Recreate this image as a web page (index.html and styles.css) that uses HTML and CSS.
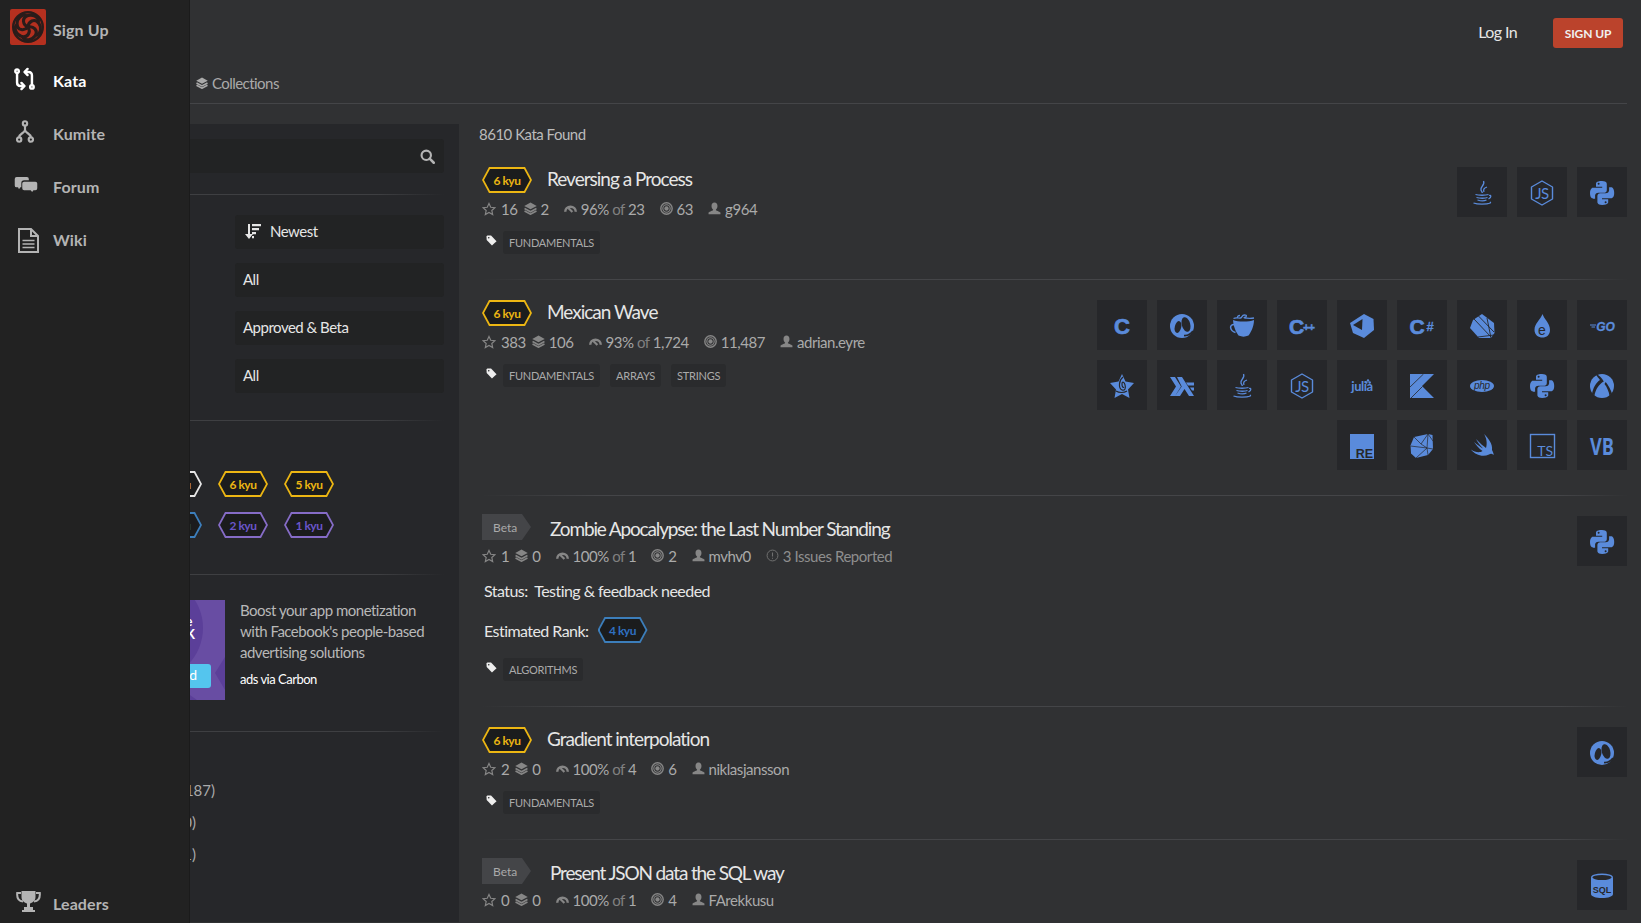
FILE: index.html
```html
<!DOCTYPE html>
<html lang="en">
<head>
<meta charset="utf-8">
<title>Kata</title>
<link rel="stylesheet" href="styles.css">
</head>
<body>
<svg class="sprite" xmlns="http://www.w3.org/2000/svg">
  <symbol id="star" viewBox="0 0 24 24"><polygon points="12 2.500 15 9 22 9.800 16.800 14.500 18.300 21.500 12 18 5.700 21.500 7.200 14.500 2 9.800 9 9" fill="none" stroke="currentColor" stroke-width="2"/></symbol>
  <symbol id="layers" viewBox="0 0 24 24"><path d="M12 1 23.500 7.500 12 13.500 .5 7.500Z" fill="currentColor"/><path d="M1 12 12 18 23 12M1 16.500 12 22.500 23 16.500" fill="none" stroke="currentColor" stroke-width="3"/></symbol>
  <symbol id="gauge" viewBox="0 0 24 24"><path d="M0 18A12 11.500 0 0 1 24 18H19.500A7.500 7 0 0 0 4.500 18Z" fill="currentColor"/><path d="M8 11 15.500 18.500" stroke="currentColor" stroke-width="4"/></symbol>
  <symbol id="target" viewBox="0 0 24 24"><g fill="none" stroke="currentColor"><circle cx="12" cy="12" r="10.500" stroke-width="2.600"/><circle cx="12" cy="12" r="6.800" stroke-width="2"/></g><circle cx="12" cy="12" r="4" fill="currentColor"/></symbol>
  <symbol id="user" viewBox="0 0 24 24"><path d="M12 1c3.500 0 5.500 2.700 5.500 6.500 0 3-1.400 5.500-3 6.700 0 2 6.500 2.800 8.500 5.300v3H1v-3c2-2.500 8.500-3.300 8.500-5.300-1.600-1.200-3-3.700-3-6.700C6.500 3.700 8.500 1 12 1Z" fill="currentColor"/></symbol>
  <symbol id="alert" viewBox="0 0 24 24"><circle cx="12" cy="12" r="10" fill="none" stroke="currentColor" stroke-width="1.800"/><path d="M12 6.500V14M12 16v2" stroke="currentColor" stroke-width="2"/></symbol>
  <symbol id="tag" viewBox="0 0 24 24"><path d="M1 2.500 3 1H11L23 13.500 13 23 1.500 11Z" fill="currentColor"/><circle cx="6" cy="6" r="1.800" fill="#303133"/></symbol>

  <symbol id="java" viewBox="0 0 50 50"><g fill="none" stroke="currentColor" stroke-width="1.300"><path d="M26.500 14c2 4-3.500 5.500-2.500 9 .3 1.200 1.300 2 1.300 3M30 20c-3 1-4 2.500-3 5"/><path d="M18.500 27.500c3 1 10 1 13 0M19.500 30.500c3 1 9 1 11 0M32 28.500c2-.8 3 1.500-.5 3.500M20.500 33c3 1 7 1 9 0"/><path d="M16.500 36c4 1.500 13 1.500 17 0M33 35c1 .8.500 1-1 1.300"/></g></symbol>
  <symbol id="js" viewBox="0 0 50 50"><path d="M25 14 35.500 20V32L25 38 14.500 32V20Z" fill="none" stroke="currentColor" stroke-width="1.400" stroke-linejoin="round"/><text class="ic-t ic-js" x="25" y="31.500" text-anchor="middle">JS</text></symbol>
  <symbol id="python" viewBox="0 0 50 50"><path d="M25 14c-6.300 0-6 2.700-6 2.700V19.800h6.200v.9H16.600S13 20.300 13 26.100s3.200 5.600 3.200 5.600h1.900V29s-.1-3.200 3.200-3.200h5.500s3 0 3-2.900V17.200S30.300 14 25 14Z" fill="currentColor"/><circle cx="21.600" cy="16.800" r="1" fill="#26272a"/><path d="M25.200 38c6.300 0 6-2.700 6-2.700V32.200H25v-.9h8.600s3.600.4 3.600-5.400-3.200-5.600-3.200-5.600h-1.900V23s.1 3.200-3.200 3.200h-5.500s-3 0-3 2.900v5.700s-.5 3.200 4.800 3.200Z" fill="currentColor"/><circle cx="28.600" cy="35.200" r="1" fill="#26272a"/></symbol>
  <symbol id="clojure" viewBox="0 0 50 50"><circle cx="25" cy="26" r="12" fill="currentColor"/><ellipse cx="21" cy="27" rx="3.200" ry="6" transform="rotate(14 21 27)" fill="#26272a"/><ellipse cx="29" cy="24.500" rx="4.200" ry="7.500" transform="rotate(-16 29 24.500)" fill="#26272a"/><path d="M27 35.500A10 10 0 0 0 36 31" fill="none" stroke="#26272a" stroke-width="1.700"/></symbol>

  <symbol id="spiral-blade" viewBox="0 0 36 36"><path d="M18 18C13 16 11 9 18 6.500 23 5 28 8 28.500 12" fill="none" stroke="#2a1c1a" stroke-width="3.100" stroke-linecap="round"/></symbol>
</svg>

<div class="page">
  <aside class="sidebar">
    <a class="side-item side-brand">
      <svg class="logo" viewBox="0 0 36 36">
        <rect width="36" height="36" rx="2" fill="#b5301f"/>
        <circle cx="18" cy="18" r="14.800" fill="none" stroke="#2a1c1a" stroke-width="2.400"/>
        <use href="#spiral-blade" width="36" height="36"/>
        <use href="#spiral-blade" width="36" height="36" transform="rotate(72 18 18)"/>
        <use href="#spiral-blade" width="36" height="36" transform="rotate(144 18 18)"/>
        <use href="#spiral-blade" width="36" height="36" transform="rotate(216 18 18)"/>
        <use href="#spiral-blade" width="36" height="36" transform="rotate(288 18 18)"/>
      </svg>
      <span>Sign Up</span>
    </a>
    <a class="side-item side-active">
      <span class="side-icon"><svg class="ico-kata" viewBox="0 0 24 26" fill="none" stroke="currentColor" stroke-width="2.800" stroke-linecap="round" stroke-linejoin="round"><circle cx="3.500" cy="4" r="2"/><path d="M3.500 6.500V17c0 2.500 1.500 4 4 4h3"/><path d="M8.500 17.500 12 21l-3.500 3.500"/><circle cx="20.500" cy="22" r="2"/><path d="M20.500 19.500V9c0-2.500-1.500-4-4-4h-3"/><path d="M15.500 8.500 12 5l3.500-3.500"/></svg></span>
      <span>Kata</span>
    </a>
    <a class="side-item">
      <span class="side-icon"><svg class="ico-kumite" viewBox="0 0 20 26" fill="none" stroke="currentColor" stroke-width="2.400"><circle cx="10" cy="4" r="2.400"/><circle cx="3.500" cy="22" r="2.400"/><circle cx="16.500" cy="22" r="2.400"/><path d="M10 6.500V11C10 15 3.500 15 3.500 19.500M10 11c0 4 6.500 4 6.500 8.500"/></svg></span>
      <span>Kumite</span>
    </a>
    <a class="side-item">
      <span class="side-icon"><svg class="ico-forum" viewBox="0 0 24 16" fill="currentColor"><path d="M2 0H13a2 2 0 0 1 2 2V3.500H10A3 3 0 0 0 7 6.500V11H6L4.500 13 3.500 11H2a2 2 0 0 1-2-2V2a2 2 0 0 1 2-2Z"/><path d="M10 5H22a2 2 0 0 1 2 2v5a2 2 0 0 1-2 2H20L18.500 16 17 14H10a2 2 0 0 1-2-2V7a2 2 0 0 1 2-2Z"/></svg></span>
      <span>Forum</span>
    </a>
    <a class="side-item">
      <span class="side-icon"><svg class="ico-wiki" viewBox="0 0 21 25" fill="none" stroke="currentColor" stroke-width="2"><path d="M1 1H13L20 8V24H1Z"/><path d="M13 1V8H20" stroke-width="2"/><path d="M4.500 12.500h12M4.500 16h12M4.500 19.500h12" stroke-width="1.700"/></svg></span>
      <span>Wiki</span>
    </a>
    <a class="side-item side-bottom">
      <span class="side-icon"><svg class="ico-leaders" viewBox="0 0 25 21" fill="currentColor"><path d="M5.500 0H19.500V6C19.500 10 16 12 14 12.500V16H17V19H19V21H6V19H8V16H11V12.500C9 12 5.500 10 5.500 6Z"/><path d="M5 2H1.200C.8 7 2.500 10 7 10.500M20 2H23.800C24.200 7 22.500 10 18 10.500" fill="none" stroke="currentColor" stroke-width="2"/></svg></span>
      <span>Leaders</span>
    </a>
  </aside>

  <header class="topbar">
    <a class="login">Log In</a>
    <a class="signup">SIGN UP</a>
  </header>
  <nav class="tabs">
    <a class="tab"><svg class="i i12"><use href="#layers"/></svg>Collections</a>
  </nav>

  <div class="content">
    <section class="filters">
      <div class="search">
        <svg class="search-icon" viewBox="0 0 24 24" fill="none" stroke="currentColor"><circle cx="10" cy="10" r="7.500" stroke-width="3.400"/><path d="M15.500 15.500 22 22" stroke-width="4" stroke-linecap="round"/></svg>
      </div>
      <div class="rule rule-search"></div>
      <div class="selects">
        <div class="select"><svg class="sort-icon" viewBox="0 0 16 15" fill="currentColor"><path d="M3 0H5V10H8L4 15 0 10H3Z"/><path d="M7 0H16V2.200H7ZM7 4H14V6.200H7ZM7 8H11V10.200H7ZM7 12H9V14.200H7Z"/></svg>Newest</div>
        <div class="select">All</div>
        <div class="select">Approved &amp; Beta</div>
        <div class="select">All</div>
      </div>
      <div class="rule rule-selects"></div>
      <div class="kyus">
        <span class="rank rank-white"><b>7 kyu</b></span>
        <span class="rank rank-yellow"><b>6 kyu</b></span>
        <span class="rank rank-yellow"><b>5 kyu</b></span>
        <span class="rank rank-blue"><b>3 kyu</b></span>
        <span class="rank rank-purple"><b>2 kyu</b></span>
        <span class="rank rank-purple"><b>1 kyu</b></span>
      </div>
      <div class="rule rule-kyus"></div>
      <div class="ad">
        <svg class="ad-image" viewBox="0 0 130 100">
          <rect width="130" height="100" fill="#684da3"/>
          <circle cx="56" cy="28" r="52" fill="#5b3f99"/>
          <path d="M130 57 120 73 130 90ZM92 93 102 100H84Z" fill="#5b3f99"/>
          <rect x="20" y="64" width="96" height="24" rx="3" fill="#54c5ee"/>
          <text class="ad-head" x="97.500" y="26" text-anchor="end">Mobile</text>
          <text class="ad-head" x="100" y="39" text-anchor="end">SDK</text>
          <text class="ad-cta" x="102" y="80" text-anchor="end">Read</text>
        </svg>
        <div class="ad-copy">
          <p class="ad-text">Boost your app monetization with Facebook's people-based advertising solutions</p>
          <p class="ad-via">ads via Carbon</p>
        </div>
      </div>
      <div class="rule rule-ad"></div>
      <div class="facets">
        <div class="facet facet-wide">All (8187)</div>
        <div class="facet">Beta (10)</div>
        <div class="facet">Draft (1)</div>
      </div>
    </section>

    <main class="results">
      <p class="found">8610 Kata Found</p>

      <article class="card">
        <div class="card-body">
          <div class="title-row"><span class="rank rank-yellow"><b>6 kyu</b></span><h3 class="title">Reversing a Process</h3></div>
          <div class="stats">
            <span class="stat-group"><span class="stat"><svg class="i i-star"><use href="#star"/></svg>16</span><span class="stat"><svg class="i"><use href="#layers"/></svg>2</span></span>
            <span class="stat"><svg class="i"><use href="#gauge"/></svg><span>96% <em>of</em> 23</span></span>
            <span class="stat"><svg class="i"><use href="#target"/></svg>63</span>
            <span class="stat"><svg class="i"><use href="#user"/></svg>g964</span>
          </div>
          <div class="tags"><svg class="tag-icon"><use href="#tag"/></svg><span class="tag">FUNDAMENTALS</span></div>
        </div>
        <div class="langs">
          <span class="lang"><svg><use href="#java"/></svg></span>
          <span class="lang"><svg><use href="#js"/></svg></span>
          <span class="lang"><svg><use href="#python"/></svg></span>
        </div>
      </article>

      <article class="card">
        <div class="card-body">
          <div class="title-row"><span class="rank rank-yellow"><b>6 kyu</b></span><h3 class="title">Mexican Wave</h3></div>
          <div class="stats">
            <span class="stat-group"><span class="stat"><svg class="i i-star"><use href="#star"/></svg>383</span><span class="stat"><svg class="i"><use href="#layers"/></svg>106</span></span>
            <span class="stat"><svg class="i"><use href="#gauge"/></svg><span>93% <em>of</em> 1,724</span></span>
            <span class="stat"><svg class="i"><use href="#target"/></svg>11,487</span>
            <span class="stat"><svg class="i"><use href="#user"/></svg>adrian.eyre</span>
          </div>
          <div class="tags"><svg class="tag-icon"><use href="#tag"/></svg><span class="tag">FUNDAMENTALS</span><span class="tag">ARRAYS</span><span class="tag">STRINGS</span></div>
        </div>
        <div class="langs langs-many">
          <span class="lang"><svg viewBox="0 0 50 50"><text class="ic-t ic-c" x="25" y="33.500" text-anchor="middle">C</text></svg></span>
          <span class="lang"><svg><use href="#clojure"/></svg></span>
          <span class="lang"><svg viewBox="0 0 50 50"><path d="M16 20C21 22 32 22 37 20 37 27 33.500 33 31.500 35.500 28 37 25 37 21.500 35.500 19 32 16.500 27 16 20Z" fill="currentColor"/><path d="M17 24.500c-5 0-4.500 6 1.500 8" fill="none" stroke="currentColor" stroke-width="1.500"/><path d="M16.500 18.500c3-1.500 5 0 7-.5s1-3 4-3 2 2 0 2.500 5 1.200 9.500.5M21 17.500c-1-1 0-2 2-2" fill="none" stroke="currentColor" stroke-width="1.300"/></svg></span>
          <span class="lang"><svg viewBox="0 0 50 50"><text class="ic-t ic-cpp" x="19.500" y="33.500" text-anchor="middle">C</text><text class="ic-t ic-plus" x="31.500" y="30.500" text-anchor="middle">++</text></svg></span>
          <span class="lang"><svg viewBox="0 0 50 50"><path d="M27 14 36.500 19 37 30 27 38 16 33 13 23Z" fill="currentColor"/><path d="M16 25 25.500 19 25 30Z" fill="#26272a"/></svg></span>
          <span class="lang"><svg viewBox="0 0 50 50"><text class="ic-t ic-cpp" x="20" y="33.500" text-anchor="middle">C</text><text class="ic-t ic-sharp" x="33" y="31" text-anchor="middle">#</text></svg></span>
          <span class="lang"><svg viewBox="0 0 50 50"><path d="M25 14 33 20 37 23 37.500 33 34 38H22L13 28 16 20Z" fill="currentColor"/><path d="M17 19 34 37M21 15.500 37 32M30 18 34 38M21 37 37 35" fill="none" stroke="#26272a" stroke-width=".9"/></svg></span>
          <span class="lang"><svg viewBox="0 0 50 50"><path d="M25.500 14C27 19 33 23 33 30 33 35 29.500 37.500 25.500 37.500S17.500 35 17.500 30C17.500 23 23.500 20 25.500 14Z" fill="currentColor"/><text class="ic-t ic-e" x="25" y="35" text-anchor="middle">e</text></svg></span>
          <span class="lang"><svg viewBox="0 0 50 50"><path d="M13 25H19M14.500 27H18" stroke="currentColor" stroke-width="1"/><text class="ic-t ic-go" x="28.500" y="30.500" text-anchor="middle">GO</text></svg></span>

          <span class="lang"><svg viewBox="0 0 50 50"><path d="M25 14 28.500 21.500 37 23 31 29.500 32.500 38 25 34 17.500 38 19 29.500 13 23 21.500 21.500Z" fill="currentColor"/><path d="M26 17c-4 3-5 11-1 13 3 1 4-2 3-5-.5-3-3-4-3-1 0 3 1 4 2 3M19 31c3 2 8 2 11 0" fill="none" stroke="#26272a" stroke-width="1.200"/></svg></span>
          <span class="lang"><svg viewBox="0 0 50 50"><path d="M13 17H18L24 26.500 18 36H13L19 26.500ZM20 17H25L37 36H32L27.500 29 23 36H18L24.700 26.500Z" fill="currentColor"/><path d="M29 22.500H37V25.500H31ZM33 27.500H37V30.500H35Z" fill="currentColor"/></svg></span>
          <span class="lang"><svg><use href="#java"/></svg></span>
          <span class="lang"><svg><use href="#js"/></svg></span>
          <span class="lang"><svg viewBox="0 0 50 50"><text class="ic-t ic-julia" x="25" y="31" text-anchor="middle">julia</text><circle cx="31" cy="20.500" r="1.200" fill="currentColor"/><circle cx="29.300" cy="22.500" r="1.200" fill="currentColor"/><circle cx="32.700" cy="22.500" r="1.200" fill="currentColor"/></svg></span>
          <span class="lang"><svg viewBox="0 0 50 50"><path d="M13 14H37L25 26 37 38H13Z" fill="currentColor"/><path d="M13 27 26.500 14M14 38 25.500 26.500" stroke="#26272a" stroke-width=".8"/></svg></span>
          <span class="lang"><svg viewBox="0 0 50 50"><ellipse cx="25" cy="26" rx="12" ry="6" fill="currentColor"/><text class="ic-t ic-php" x="25" y="29" text-anchor="middle">php</text></svg></span>
          <span class="lang"><svg><use href="#python"/></svg></span>
          <span class="lang"><svg viewBox="0 0 50 50"><circle cx="25" cy="26" r="12" fill="currentColor"/><path d="M18.500 13.500C22 15 25 18 26.800 21.500 22 24 18.500 29.500 17.500 35.500L15 34C16 28 19 22.500 23 20 21.500 18 20 16.500 18.500 13.500Z" fill="#26272a"/><path d="M27.500 24C30 27 32 32 32.500 36L35 33.500C34 30 31 25 28.700 22Z" fill="#26272a"/></svg></span>

          <span class="lang"><svg viewBox="0 0 50 50"><rect x="13" y="14" width="24" height="25" fill="currentColor"/><text class="ic-t ic-re" x="36" y="37.500" text-anchor="end">RE</text></svg></span>
          <span class="lang"><svg viewBox="0 0 50 50"><path d="M17 17 31 14 35.500 15 36 29 31 35 19 38 14 33.500 13.500 25.500Z" fill="currentColor"/><path d="M13.500 26 30 28 19 38M17 17 24 24 30 28 31 35M31 14 30 28 36 29M24 24 31 14 36 21" fill="none" stroke="#26272a" stroke-width=".7"/></svg></span>
          <span class="lang"><svg viewBox="0 0 50 50"><path d="M27 14C31 18 36 24 35 30 36 32 37 34 36.500 35 35 33.500 33.500 33.500 32 34.500 26 37.500 18 35 14 29.500 18 32.500 23 33 25.500 31 22 28.500 18.500 24.500 17 22 20 24.500 24 27.500 26 28.500 23 25.500 20 21.500 19 19 23 23.500 27 26.500 29 28 30.500 23 29.500 18 27 14Z" fill="currentColor"/></svg></span>
          <span class="lang"><svg viewBox="0 0 50 50"><rect x="13.500" y="14.500" width="24" height="23" fill="none" stroke="currentColor" stroke-width="1.400"/><text class="ic-t ic-ts" x="36" y="36" text-anchor="end">TS</text></svg></span>
          <span class="lang"><svg viewBox="0 0 50 50"><text class="ic-t ic-vb" x="13" y="35" textLength="24" lengthAdjust="spacingAndGlyphs">VB</text></svg></span>
        </div>
      </article>

      <article class="card card-beta">
        <div class="card-body">
          <div class="title-row"><span class="beta">Beta</span><h3 class="title title-beta">Zombie Apocalypse: the Last Number Standing</h3></div>
          <div class="stats">
            <span class="stat-group"><span class="stat"><svg class="i i-star"><use href="#star"/></svg>1</span><span class="stat"><svg class="i"><use href="#layers"/></svg>0</span></span>
            <span class="stat"><svg class="i"><use href="#gauge"/></svg><span>100% <em>of</em> 1</span></span>
            <span class="stat"><svg class="i"><use href="#target"/></svg>2</span>
            <span class="stat"><svg class="i"><use href="#user"/></svg>mvhv0</span>
            <span class="stat stat-dim"><svg class="i"><use href="#alert"/></svg>3 Issues Reported</span>
          </div>
          <p class="status">Status:&nbsp; Testing &amp; feedback needed</p>
          <div class="estimate">Estimated Rank: <span class="rank rank-blue"><b>4 kyu</b></span></div>
          <div class="tags"><svg class="tag-icon"><use href="#tag"/></svg><span class="tag">ALGORITHMS</span></div>
        </div>
        <div class="langs">
          <span class="lang"><svg><use href="#python"/></svg></span>
        </div>
      </article>

      <article class="card">
        <div class="card-body">
          <div class="title-row"><span class="rank rank-yellow"><b>6 kyu</b></span><h3 class="title">Gradient interpolation</h3></div>
          <div class="stats">
            <span class="stat-group"><span class="stat"><svg class="i i-star"><use href="#star"/></svg>2</span><span class="stat"><svg class="i"><use href="#layers"/></svg>0</span></span>
            <span class="stat"><svg class="i"><use href="#gauge"/></svg><span>100% <em>of</em> 4</span></span>
            <span class="stat"><svg class="i"><use href="#target"/></svg>6</span>
            <span class="stat"><svg class="i"><use href="#user"/></svg>niklasjansson</span>
          </div>
          <div class="tags"><svg class="tag-icon"><use href="#tag"/></svg><span class="tag">FUNDAMENTALS</span></div>
        </div>
        <div class="langs">
          <span class="lang"><svg><use href="#clojure"/></svg></span>
        </div>
      </article>

      <article class="card card-beta">
        <div class="card-body">
          <div class="title-row"><span class="beta">Beta</span><h3 class="title title-beta">Present JSON data the SQL way</h3></div>
          <div class="stats">
            <span class="stat-group"><span class="stat"><svg class="i i-star"><use href="#star"/></svg>0</span><span class="stat"><svg class="i"><use href="#layers"/></svg>0</span></span>
            <span class="stat"><svg class="i"><use href="#gauge"/></svg><span>100% <em>of</em> 1</span></span>
            <span class="stat"><svg class="i"><use href="#target"/></svg>4</span>
            <span class="stat"><svg class="i"><use href="#user"/></svg>FArekkusu</span>
          </div>
        </div>
        <div class="langs">
          <span class="lang"><svg viewBox="0 0 50 50"><path d="M14 18V34C14 36.500 19 38 25 38S36 36.500 36 34V18Z" fill="currentColor"/><ellipse cx="25" cy="17.500" rx="10.300" ry="3.300" fill="#26272a" stroke="currentColor" stroke-width="1.400"/><text class="ic-t ic-sql" x="25" y="33" text-anchor="middle">SQL</text></svg></span>
        </div>
      </article>
    </main>
  </div>
</div>
</body>
</html>
```

FILE: styles.css
```css
* { box-sizing: border-box; }
html, body { margin: 0; padding: 0; }
body {
  background: #303133;
  color: #aaaaaa;
  font-family: Lato, "Liberation Sans", sans-serif;
  font-size: 15px;
  letter-spacing: -0.5px;
}
p, h3 { margin: 0; }
.sprite { display: none; }

.page { position: relative; height: 923px; overflow: hidden; }

.sidebar {
  position: absolute;
  left: 0; top: 0; bottom: 0;
  z-index: 5;
  width: 190px;
  display: flex;
  flex-direction: column;
  background: #222222;
  border-right: 1px solid #1b1b1b;
  font-size: 16px;
  font-weight: 700;
  color: #b4b4b4;
  letter-spacing: 0.1px;
}
.side-item { display: flex; align-items: center; height: 53px; padding: 0 0 2px 53px; position: relative; }
.side-brand { height: 55px; padding-top: 6px; }
.logo { position: absolute; left: 10px; top: 9px; width: 36px; height: 36px; }
.side-active { color: #ffffff; }
.side-icon { position: absolute; left: 0; top: 0; bottom: 0; width: 52px; display: flex; align-items: center; }
.ico-kata { width: 21px; height: 24px; margin: -5px 0 0 14px; }
.ico-kumite { width: 18px; height: 25px; margin: -6px 0 0 16px; }
.ico-forum { width: 24px; height: 15px; margin: -6px 0 0 14px; }
.ico-wiki { width: 21px; height: 25px; margin: 0 0 0 18px; }
.ico-leaders { width: 25px; height: 21px; margin: -4px 0 0 16px; }
.side-bottom { margin-top: auto; margin-bottom: -7px; height: 53px; padding-bottom: 0; }

.topbar { display: flex; justify-content: flex-end; align-items: center; padding: 18px 18px 0 0; gap: 36px; }
.login { color: #e6e6e6; font-size: 16px; letter-spacing: -0.6px; padding-bottom: 4px; }
.signup { display: flex; align-items: center; justify-content: center; width: 70px; height: 30px; background: #bb432c; border-radius: 3px; color: #f0f0f0; font-size: 12px; font-weight: 700; letter-spacing: -0.1px; }

.tabs { height: 56px; margin: 0 14px 0 190px; padding: 25px 0 0 6px; border-bottom: 1px solid #444548; display: flex; align-items: flex-start; }
.tab { display: flex; align-items: center; gap: 4px; line-height: 20px; letter-spacing: -0.55px; }
.tab .i { color: #aaaaaa; }

.i { width: 13px; height: 13px; flex: none; color: #868686; }
.i-star { width: 14px; height: 14px; margin-right: 1px; }
.i12 { width: 12px; height: 12px; }

.content { display: flex; margin-top: 20px; height: 798px; }
.filters { width: 459px; flex: none; background: #26272a; padding: 15px 15px 0 0; }

.search { height: 34px; margin-left: 150px; background: #222324; border-radius: 3px; display: flex; align-items: center; justify-content: flex-end; padding-right: 9px; }
.search-icon { width: 15px; height: 15px; color: #b4b4b4; }

.rule { height: 1px; background: linear-gradient(90deg, #3e3f42 0%, #3e3f42 85%, rgba(62, 63, 66, 0) 100%); }
.rule-search { margin-top: 21px; }
.selects { margin: 20px 0 0 235px; display: flex; flex-direction: column; gap: 14px; }
.select { display: flex; align-items: center; height: 34px; padding: 0 0 2px 8px; background: #222324; border-radius: 3px; color: #e6e6e6; }
.sort-icon { width: 16px; height: 15px; margin: 0 9px 0 2px; }
.rule-selects { margin-top: 27px; }

.kyus { display: grid; grid-template-columns: repeat(3, 50px); gap: 15px 16px; margin: 50px 0 0 152px; }
.rule-kyus { margin-top: 36px; }

.rank { position: relative; flex: none; display: flex; align-items: center; justify-content: center; width: 50px; height: 26px; clip-path: polygon(0 50%, 7px 0, 43px 0, 100% 50%, 43px 100%, 7px 100%); font-size: 12px; font-weight: 700; letter-spacing: -0.5px; }
.rank::before { content: ""; position: absolute; inset: 2px; background: #1b1c1d; clip-path: polygon(0 50%, 6px 0, 40px 0, 100% 50%, 40px 100%, 6px 100%); }
.rank b { position: relative; font-weight: 700; }
.rank-yellow { background: #ecb613; color: #ecb613; }
.rank-white { background: #e6e6e6; color: #e6e6e6; }
.rank-blue { background: #3c7ebb; color: #2f6fc0; }
.rank-purple { background: #866cc7; color: #6a55c9; }

.ad { display: flex; gap: 15px; margin: 25px 0 0 95px; height: 100px; }
.ad-image { width: 130px; height: 100px; flex: none; }
.ad-head { font-family: Lato, sans-serif; font-size: 13px; font-weight: 700; fill: #ffffff; letter-spacing: 0; }
.ad-cta { font-family: Lato, sans-serif; font-size: 14px; fill: #ffffff; letter-spacing: 0; }
.ad-copy { width: 200px; }
.ad-text { line-height: 21px; color: #b8b8b8; }
.ad-via { margin-top: 6px; font-size: 13px; color: #ffffff; line-height: 20px; }
.rule-ad { margin-top: 31px; }

.facets { margin-top: 42px; }
.facet { width: 196px; height: 32px; line-height: 32px; text-align: right; white-space: nowrap; color: #aaaaaa; font-size: 15px; letter-spacing: 0; }
.facet-wide { width: 215px; }

.results { flex: 1; margin-right: 14px; padding-left: 23px; min-width: 0; }
.found { margin: 0 0 3px -3px; line-height: 20px; color: #bbbbbb; }

.card { display: flex; justify-content: space-between; padding: 20px 0 25px; border-bottom: 1px solid; border-image: linear-gradient(90deg, rgba(68, 69, 72, 0), #444548 10%, #444548 94%, rgba(68, 69, 72, 0)) 1; }
.card-beta { padding-top: 18px; }
.card-beta .langs { margin-top: 2px; }
.title-row { display: flex; align-items: center; gap: 15px; height: 26px; }
.title { font-size: 19px; font-weight: 400; color: #e6e6e6; letter-spacing: -1px; white-space: nowrap; margin-top: -4px; }
.title-beta { margin: 2px 0 0 4px; letter-spacing: -1.15px; }
.beta { width: 49px; height: 26px; padding-left: 11px; display: flex; align-items: center; background: #444548; color: #aaaaaa; font-size: 12px; letter-spacing: 0; clip-path: polygon(0 0, 40px 0, 100% 50%, 40px 100%, 0 100%); }

.stats { display: flex; align-items: center; gap: 15px; height: 20px; margin-top: 6px; white-space: nowrap; letter-spacing: -0.45px; padding-bottom: 1px; }
.stat-group { display: flex; gap: 6px; }
.stat { display: flex; align-items: center; gap: 4px; }
.stat em { font-style: normal; color: #808080; }
.stat-dim { color: #8e8e8e; }
.stat-dim .i { color: #707070; }

.tags { display: flex; align-items: flex-start; margin-top: 12px; gap: 10px; }
.tag-icon { width: 11px; height: 11px; margin: 4px -4px 0 4px; color: #eeeeee; }
.tag { height: 23px; line-height: 23px; padding: 0 6px; background: #2a2b2d; border-radius: 3px; font-size: 11px; letter-spacing: -0.25px; color: #aaaaaa; }

.status { margin-top: 15px; margin-left: 2px; line-height: 20px; color: #e6e6e6; font-size: 16px; letter-spacing: -0.55px; }
.estimate { display: flex; align-items: center; gap: 9px; margin: 16px 0 0 2px; height: 26px; color: #e6e6e6; font-size: 16px; letter-spacing: -0.55px; }
.card-beta .tags { margin-top: 15px; }

.langs { display: flex; flex-wrap: wrap; justify-content: flex-end; align-content: flex-start; gap: 10px; flex: none; }
.langs-many { width: 530px; }
.lang { width: 50px; height: 50px; background: #26272a; color: #5a8bdb; display: block; }
.lang svg { display: block; width: 50px; height: 50px; }

.ic-t { font-family: "Liberation Sans", sans-serif; font-weight: 700; fill: currentColor; letter-spacing: 0; }
.ic-c { font-size: 22px; stroke: currentColor; stroke-width: .7px; }
.ic-cpp { font-size: 21px; stroke: currentColor; stroke-width: .7px; }
.ic-plus { font-size: 11px; stroke: currentColor; stroke-width: .4px; letter-spacing: -1px; }
.ic-sharp { font-size: 13px; stroke: currentColor; stroke-width: .3px; }
.ic-js { font-family: Lato, sans-serif; font-size: 15px; font-weight: 400; letter-spacing: -.5px; }
.ic-e { font-size: 14px; font-weight: 400; fill: #26272a; }
.ic-go { font-size: 12px; font-style: italic; stroke: currentColor; stroke-width: .3px; }
.ic-julia { font-family: Lato, sans-serif; font-size: 13px; letter-spacing: -.5px; }
.ic-php { font-size: 10px; font-style: italic; font-weight: 400; fill: #26272a; letter-spacing: -.3px; }
.ic-re { font-size: 12.500px; fill: #26272a; }
.ic-ts { font-family: Lato, sans-serif; font-size: 14px; font-weight: 400; }
.ic-vb { font-family: "Open Sans", sans-serif; font-size: 24px; }
.ic-sql { font-size: 9px; fill: #26272a; }
```
